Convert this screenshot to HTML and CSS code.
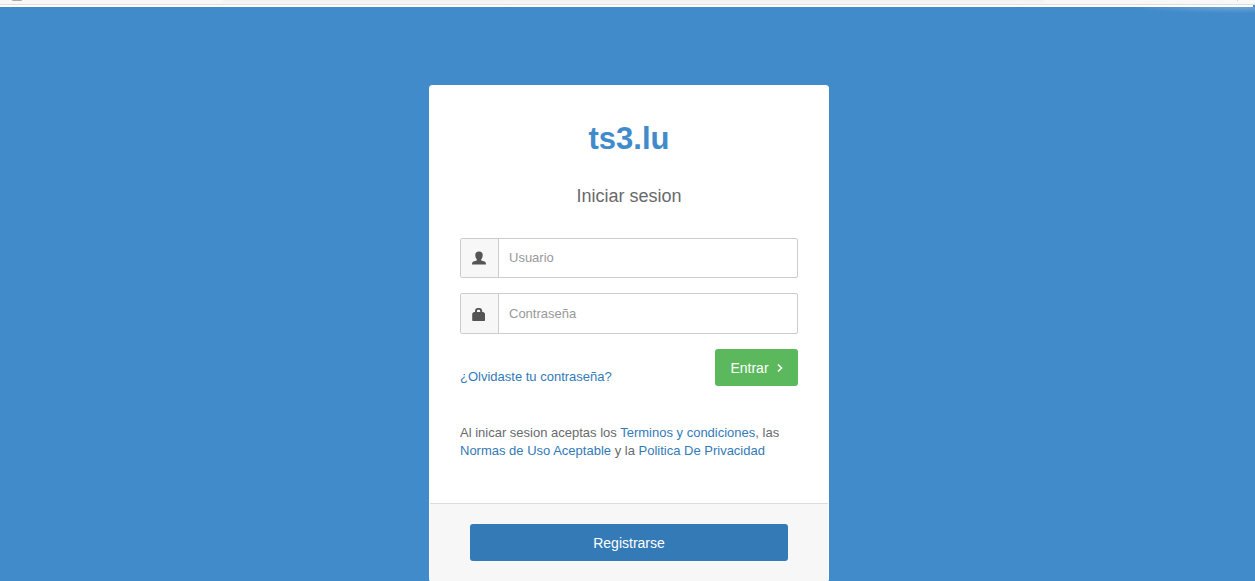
FILE: index.html
```
<!DOCTYPE html>
<html lang="es">
<head>
<meta charset="utf-8">
<title>ts3.lu</title>
<link rel="stylesheet" href="styles.css">
</head>
<body>
<div class="toolbar">
  <span class="toolbar-icon"></span>
  <span class="address"></span>
  <span class="toolbar-mark"></span>
</div>
<div class="strip"></div>
<main class="page">
  <section class="card">
    <form class="body">
      <h1 class="brand">ts3.lu</h1>
      <h2 class="subtitle">Iniciar sesion</h2>
      <div class="field">
        <label class="addon" for="user" aria-label="Usuario">
          <svg width="14" height="14" viewBox="0 0 14 14"><path fill="#555" d="M7 0.5C9.6 0.5 10.7 1.8 10.7 4C10.7 5.8 10.2 7.4 9.2 8.3V9.4L12.6 10.6C13.6 11.1 14 12 14 13.5H0C0 12 0.4 11.1 1.4 10.6L4.8 9.4V8.3C3.8 7.4 3.3 5.8 3.3 4C3.3 1.8 4.4 0.5 7 0.5Z"/></svg>
        </label>
        <input class="input" id="user" type="text" placeholder="Usuario">
      </div>
      <div class="field field-password">
        <label class="addon" for="pass" aria-label="Contraseña">
          <svg width="14" height="14" viewBox="0 0 14 14"><path fill="#555" fill-rule="evenodd" d="M3 5V4C3 2 4.2 1 5.8 1H7.4C9 1 10.2 2 10.2 4V5H11.4L13 6.6V13.2Q13 14 12.2 14H1Q0.2 14 0.2 13.2V6.6L1.8 5ZM5 5H8.2V4Q8.2 2.8 7.2 2.8H6Q5 2.8 5 4Z"/></svg>
        </label>
        <input class="input" id="pass" type="password" placeholder="Contraseña">
      </div>
      <div class="actions">
        <a class="link" href="#">¿Olvidaste tu contraseña?</a>
        <button class="button enter" type="submit">Entrar
          <svg width="6" height="10" viewBox="0 0 6 10"><path d="M1 1.5L4.5 5L1 8.5" fill="none" stroke="#fff" stroke-width="1.6"/></svg>
        </button>
      </div>
      <p class="terms">Al inicar sesion aceptas los <a class="link" href="#">Terminos y condiciones</a>, las <a class="link" href="#">Normas de Uso Aceptable</a> y la <a class="link" href="#">Politica De Privacidad</a></p>
    </form>
    <footer class="footer">
      <button class="button register" type="button">Registrarse</button>
    </footer>
  </section>
</main>
</body>
</html>
```
FILE: styles.css
```
* { box-sizing: border-box; }
body {
  margin: 0;
  overflow: hidden;
  background: #428bca;
  color: #676a6c;
  font: 13px/18px "Liberation Sans", Arial, sans-serif;
}
.toolbar {
  display: flex;
  height: 5px;
  padding: 0 17px 0 12px;
  background: #f8f8f8;
  border-bottom: 1px solid #ddd;
  overflow: hidden;
}
.toolbar-icon {
  width: 10px;
  height: 1px;
  border-radius: 0 0 5px 5px;
  background: #aaa;
}
.address {
  flex: 1;
  margin: 0 193px 0 201px;
  background: linear-gradient(#f1f1f1, #f8f8f8);
}
.toolbar-mark {
  width: 1px;
  height: 1px;
  background: #ccc;
}
.strip {
  height: 2px;
  margin-right: 2px;
  background: #fff;
}
.page {
  padding: 78px 0 0 3px;
  background: radial-gradient(ellipse 100px 6px at calc(100% - 20px) 0, #6ba4d6, transparent) no-repeat;
}
.card {
  width: 400px;
  max-width: 100%;
  margin: 0 auto;
  border: 1px solid #fff;
  border-radius: 3px;
  background: #fff;
  overflow: hidden;
}
.body { padding: 30px 30px 43px; }
.brand {
  margin: 0;
  color: #428bca;
  font-size: 31px;
  line-height: 46px;
  text-align: center;
}
.subtitle {
  margin: 22px 0 30px;
  font-size: 18px;
  font-weight: 400;
  line-height: 24px;
  text-align: center;
}
.field {
  display: flex;
  height: 40px;
  margin-bottom: 15px;
  border: 1px solid #ccc;
  border-radius: 2px;
}
.field-password { height: 41px; }
.addon {
  display: flex;
  align-items: center;
  justify-content: center;
  width: 38px;
  padding-right: 2px;
  background: #f7f7f7;
  border-right: 1px solid #ccc;
}
.input {
  flex: 1;
  min-width: 0;
  padding: 0 10px;
  border: 0;
  background: transparent;
  color: #555;
  font: inherit;
}
.input::placeholder { color: #999; opacity: 1; }
.link { color: #337ab7; text-decoration: none; }
.actions {
  display: flex;
  align-items: flex-end;
  justify-content: space-between;
}
.button {
  height: 37px;
  border: 0;
  border-radius: 3px;
  color: #fff;
  font: 14px/20px "Liberation Sans", Arial, sans-serif;
}
.enter {
  display: flex;
  align-items: center;
  justify-content: center;
  gap: 8px;
  width: 83px;
  background: #5cb85c;
}
.terms { margin: 38px 0 0; }
.footer {
  padding: 20px 40px;
  border-top: 1px solid #ddd;
  background: #f7f7f7;
}
.register {
  display: block;
  width: 100%;
  background: #337ab7;
}
```
